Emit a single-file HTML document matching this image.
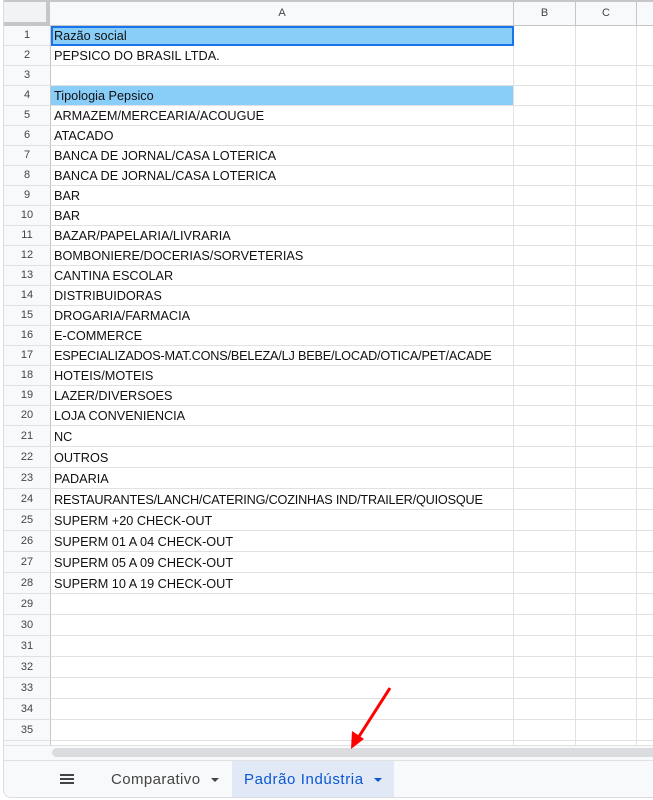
<!DOCTYPE html>
<html><head><meta charset="utf-8"><style>
*{margin:0;padding:0;box-sizing:border-box}
body{width:653px;height:800px;overflow:hidden;background:#fff;font-family:"Liberation Sans",sans-serif;position:relative}
.frame{position:absolute;left:3px;top:0;width:660px;height:798px;border-left:1px solid #dadce0;border-bottom:1px solid #dadce0;border-radius:0 0 0 8px;overflow:hidden}
.hdr{position:absolute;left:0;top:0;width:660px;height:26px;background:#f8f9fa;border-top:2px solid #c7c7c7;border-bottom:1px solid #c4c7c5}
.corner{position:absolute;left:0;top:0;width:46px;height:24px;background:#f1f3f4;border-right:4px solid #c4c7c5;border-bottom:4px solid #c4c7c5}
.ch{position:absolute;top:0;height:24px;line-height:22px;text-align:center;font-size:11px;color:#444;border-right:1px solid #c4c7c5}
.rn{position:absolute;left:0;width:47px;background:#f8f9fa;border-right:1px solid #c4c7c5;border-bottom:1px solid #e1e1e1;text-align:center;font-size:11px;color:#444}
.row{position:absolute;left:47px;width:620px;border-bottom:1px solid #e1e1e1}
.c{position:absolute;left:3px;font-size:12.7px;color:#111;white-space:nowrap}
.vl{position:absolute;top:26px;height:722px;width:1px;background:#e1e1e1}
.blue{background:#89cdf9}
</style></head><body>
<div class="frame">
<div class="vl" style="left:509px"></div>
<div class="vl" style="left:571px"></div>
<div class="vl" style="left:632px"></div>
<div class="rn" style="top:26px;height:20px;line-height:19px">1</div><div class="row blue" style="top:26px;height:20px;width:463px;border:2px solid #1a73e8"><span class="c" style="left:1px;top:1px">Razão social</span></div>
<div class="rn" style="top:46px;height:20px;line-height:19px">2</div><div class="row" style="top:46px;height:20px"><span class="c" style="top:3px">PEPSICO DO BRASIL LTDA.</span></div>
<div class="rn" style="top:66px;height:20px;line-height:19px">3</div><div class="row" style="top:66px;height:20px"></div>
<div class="rn" style="top:86px;height:20px;line-height:19px">4</div><div class="row" style="top:86px;height:20px"><div class="blue" style="position:absolute;left:0;top:0;width:462px;height:19px"></div><span class="c" style="top:3px">Tipologia Pepsico</span></div>
<div class="rn" style="top:106px;height:20px;line-height:19px">5</div><div class="row" style="top:106px;height:20px"><span class="c" style="top:3px">ARMAZEM/MERCEARIA/ACOUGUE</span></div>
<div class="rn" style="top:126px;height:20px;line-height:19px">6</div><div class="row" style="top:126px;height:20px"><span class="c" style="top:3px">ATACADO</span></div>
<div class="rn" style="top:146px;height:20px;line-height:19px">7</div><div class="row" style="top:146px;height:20px"><span class="c" style="top:3px">BANCA DE JORNAL/CASA LOTERICA</span></div>
<div class="rn" style="top:166px;height:20px;line-height:19px">8</div><div class="row" style="top:166px;height:20px"><span class="c" style="top:3px">BANCA DE JORNAL/CASA LOTERICA</span></div>
<div class="rn" style="top:186px;height:20px;line-height:19px">9</div><div class="row" style="top:186px;height:20px"><span class="c" style="top:3px">BAR</span></div>
<div class="rn" style="top:206px;height:20px;line-height:19px">10</div><div class="row" style="top:206px;height:20px"><span class="c" style="top:3px">BAR</span></div>
<div class="rn" style="top:226px;height:20px;line-height:19px">11</div><div class="row" style="top:226px;height:20px"><span class="c" style="top:3px">BAZAR/PAPELARIA/LIVRARIA</span></div>
<div class="rn" style="top:246px;height:20px;line-height:19px">12</div><div class="row" style="top:246px;height:20px"><span class="c" style="top:3px">BOMBONIERE/DOCERIAS/SORVETERIAS</span></div>
<div class="rn" style="top:266px;height:20px;line-height:19px">13</div><div class="row" style="top:266px;height:20px"><span class="c" style="top:3px">CANTINA ESCOLAR</span></div>
<div class="rn" style="top:286px;height:20px;line-height:19px">14</div><div class="row" style="top:286px;height:20px"><span class="c" style="top:3px">DISTRIBUIDORAS</span></div>
<div class="rn" style="top:306px;height:20px;line-height:19px">15</div><div class="row" style="top:306px;height:20px"><span class="c" style="top:3px">DROGARIA/FARMACIA</span></div>
<div class="rn" style="top:326px;height:20px;line-height:19px">16</div><div class="row" style="top:326px;height:20px"><span class="c" style="top:3px">E-COMMERCE</span></div>
<div class="rn" style="top:346px;height:20px;line-height:19px">17</div><div class="row" style="top:346px;height:20px"><span class="c" style="top:3px;letter-spacing:-0.2px">ESPECIALIZADOS-MAT.CONS/BELEZA/LJ BEBE/LOCAD/OTICA/PET/ACADE</span></div>
<div class="rn" style="top:366px;height:20px;line-height:19px">18</div><div class="row" style="top:366px;height:20px"><span class="c" style="top:3px">HOTEIS/MOTEIS</span></div>
<div class="rn" style="top:386px;height:20px;line-height:19px">19</div><div class="row" style="top:386px;height:20px"><span class="c" style="top:3px">LAZER/DIVERSOES</span></div>
<div class="rn" style="top:406px;height:20px;line-height:19px">20</div><div class="row" style="top:406px;height:20px"><span class="c" style="top:3px">LOJA CONVENIENCIA</span></div>
<div class="rn" style="top:426px;height:21px;line-height:20px">21</div><div class="row" style="top:426px;height:21px"><span class="c" style="top:4px">NC</span></div>
<div class="rn" style="top:447px;height:21px;line-height:20px">22</div><div class="row" style="top:447px;height:21px"><span class="c" style="top:4px">OUTROS</span></div>
<div class="rn" style="top:468px;height:21px;line-height:20px">23</div><div class="row" style="top:468px;height:21px"><span class="c" style="top:4px">PADARIA</span></div>
<div class="rn" style="top:489px;height:21px;line-height:20px">24</div><div class="row" style="top:489px;height:21px"><span class="c" style="top:4px;letter-spacing:-0.2px">RESTAURANTES/LANCH/CATERING/COZINHAS IND/TRAILER/QUIOSQUE</span></div>
<div class="rn" style="top:510px;height:21px;line-height:20px">25</div><div class="row" style="top:510px;height:21px"><span class="c" style="top:4px">SUPERM +20 CHECK-OUT</span></div>
<div class="rn" style="top:531px;height:21px;line-height:20px">26</div><div class="row" style="top:531px;height:21px"><span class="c" style="top:4px">SUPERM 01 A 04 CHECK-OUT</span></div>
<div class="rn" style="top:552px;height:21px;line-height:20px">27</div><div class="row" style="top:552px;height:21px"><span class="c" style="top:4px">SUPERM 05 A 09 CHECK-OUT</span></div>
<div class="rn" style="top:573px;height:21px;line-height:20px">28</div><div class="row" style="top:573px;height:21px"><span class="c" style="top:4px">SUPERM 10 A 19 CHECK-OUT</span></div>
<div class="rn" style="top:594px;height:21px;line-height:20px">29</div><div class="row" style="top:594px;height:21px"></div>
<div class="rn" style="top:615px;height:21px;line-height:20px">30</div><div class="row" style="top:615px;height:21px"></div>
<div class="rn" style="top:636px;height:21px;line-height:20px">31</div><div class="row" style="top:636px;height:21px"></div>
<div class="rn" style="top:657px;height:21px;line-height:20px">32</div><div class="row" style="top:657px;height:21px"></div>
<div class="rn" style="top:678px;height:21px;line-height:20px">33</div><div class="row" style="top:678px;height:21px"></div>
<div class="rn" style="top:699px;height:21px;line-height:20px">34</div><div class="row" style="top:699px;height:21px"></div>
<div class="rn" style="top:720px;height:21px;line-height:20px">35</div><div class="row" style="top:720px;height:21px"></div>
<div class="rn" style="top:741px;height:21px;line-height:20px">36</div>
<div class="hdr"><div class="corner"></div>
<div class="ch" style="left:47px;width:463px">A</div>
<div class="ch" style="left:510px;width:62px">B</div>
<div class="ch" style="left:572px;width:61px">C</div>
</div>
<div style="position:absolute;left:0;top:745px;width:660px;height:15px;background:#f8f9fa;border-top:1px solid #e1e1e1"></div>
<div style="position:absolute;left:48px;top:748px;width:620px;height:9px;background:#dadce0;border-radius:5px"></div>
<div style="position:absolute;left:0;top:760px;width:660px;height:38px;background:#f8f9fa;border-top:1px solid #e1e1e1"></div>
<div style="position:absolute;left:56px;top:774px;width:14px;height:2px;background:#444;box-shadow:0 4px 0 #444,0 8px 0 #444"></div>
<div style="position:absolute;left:107px;top:771px;font-size:15px;color:#444;letter-spacing:0.4px">Comparativo</div>
<div style="position:absolute;left:207px;top:778px;border-left:4px solid transparent;border-right:4px solid transparent;border-top:4px solid #444"></div>
<div style="position:absolute;left:228px;top:761px;width:162px;height:36px;background:#e1e9f7"></div>
<div style="position:absolute;left:240px;top:771px;font-size:15px;color:#0b57d0;letter-spacing:0.6px">Padrão Indústria</div>
<div style="position:absolute;left:370px;top:778px;border-left:4px solid transparent;border-right:4px solid transparent;border-top:4px solid #0b57d0"></div>
</div>
<svg style="position:absolute;left:0;top:0" width="653" height="800">
<line x1="390" y1="688" x2="358" y2="738" stroke="#f00" stroke-width="3"/>
<polygon points="351,749 352,731 364,739" fill="#f00"/>
</svg>
</body></html>
